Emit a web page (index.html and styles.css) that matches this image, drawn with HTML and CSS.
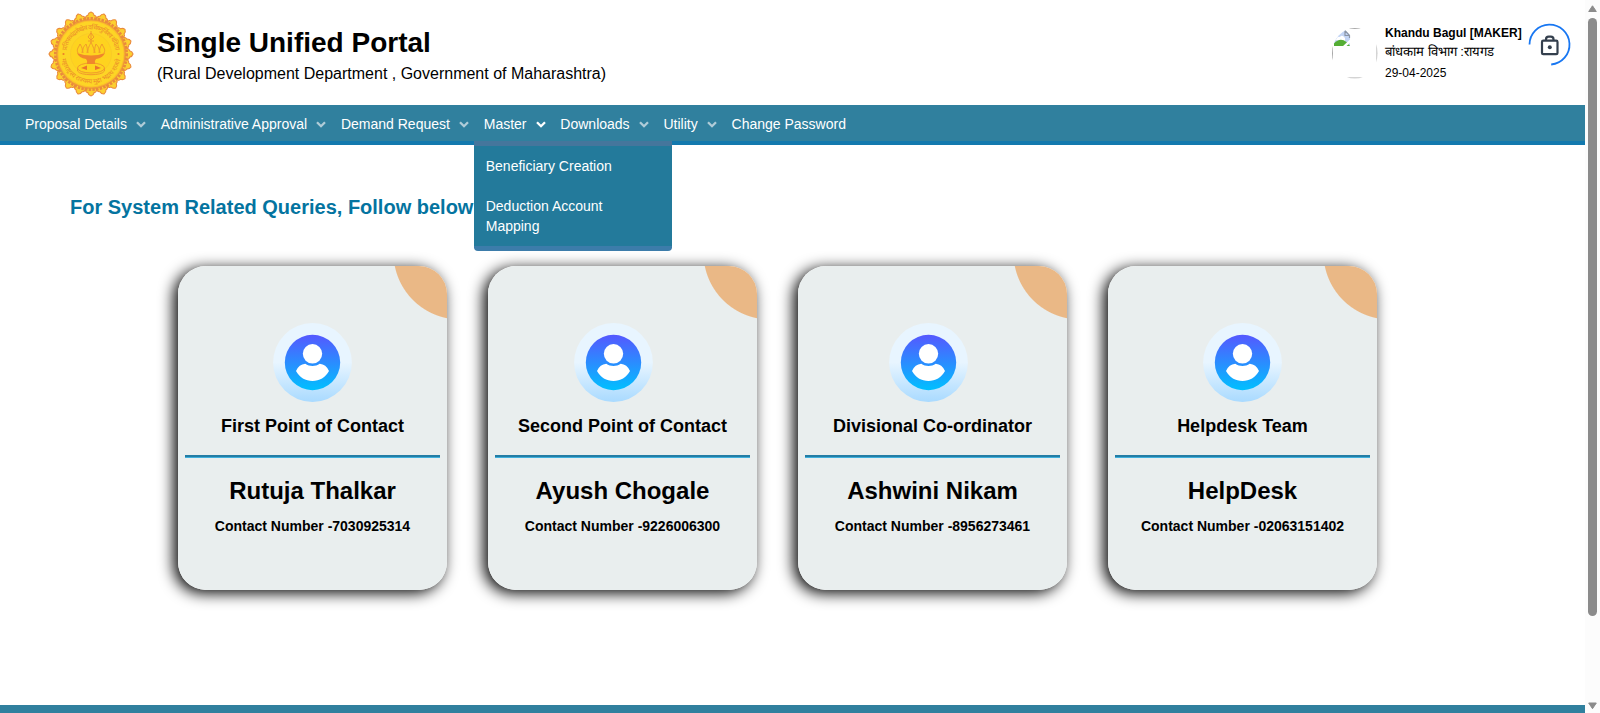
FILE: index.html
```html
<!DOCTYPE html>
<html lang="en">
<head>
<meta charset="utf-8">
<title>Single Unified Portal</title>
<link rel="stylesheet" href="styles.css">
</head>
<body>
<svg class="defs" width="0" height="0" aria-hidden="true">
  <defs>
    <linearGradient id="halo" x1="0" y1="0" x2="0" y2="1"><stop offset=".5" stop-color="#e8f5ff"/><stop offset="1" stop-color="#a9daff"/></linearGradient>
    <linearGradient id="disc" x1="0" y1="0" x2="0" y2="1"><stop offset="0" stop-color="#5558ff"/><stop offset="1" stop-color="#00c0ff"/></linearGradient>
    <symbol id="person" viewBox="0 0 79 79">
      <circle cx="39.5" cy="39.5" r="39.4" fill="url(#halo)"/>
      <circle cx="39.5" cy="39.5" r="27.7" fill="url(#disc)"/>
      <circle cx="39.5" cy="30.8" r="9.7" fill="#fff"/>
      <path d="M32.3 40.8C36.5 43.7 42.500 43.700 46.700 40.800C51 41.200 54 43.500 56 48C52.500 54.500 46.500 58 39.500 58S26.500 54.500 23 48C25 43.500 28 41.200 32.300 40.800Z" fill="#fff"/>
    </symbol>
    <symbol id="chevron" viewBox="0 0 10 7"><path d="M1 1.200L5 5.200L9 1.200" fill="none" stroke="currentColor" stroke-width="2.300"/></symbol>
    <path id="petal" d="M-5-34Q-6.500-38-3.200-38.600Q-2.500-41.300 0-42Q2.500-41.300 3.200-38.600Q6.500-38 5-34Z"/>
  </defs>
</svg>
<div class="page">
  <header class="header">
    <svg class="emblem" width="86" height="86" viewBox="-43 -43 86 86">
      <g fill="#fcd030" stroke="#ea8a3c" stroke-width="1.100">
        <use href="#petal"/><use href="#petal" transform="rotate(18)"/><use href="#petal" transform="rotate(36)"/><use href="#petal" transform="rotate(54)"/>
        <use href="#petal" transform="rotate(72)"/><use href="#petal" transform="rotate(90)"/><use href="#petal" transform="rotate(108)"/><use href="#petal" transform="rotate(126)"/>
        <use href="#petal" transform="rotate(144)"/><use href="#petal" transform="rotate(162)"/><use href="#petal" transform="rotate(180)"/><use href="#petal" transform="rotate(198)"/>
        <use href="#petal" transform="rotate(216)"/><use href="#petal" transform="rotate(234)"/><use href="#petal" transform="rotate(252)"/><use href="#petal" transform="rotate(270)"/>
        <use href="#petal" transform="rotate(288)"/><use href="#petal" transform="rotate(306)"/><use href="#petal" transform="rotate(324)"/><use href="#petal" transform="rotate(342)"/>
      </g>
      <circle r="35.500" fill="none" stroke="#ea8a3c" stroke-width="3" stroke-dasharray="2.500 1.200"/>
      <circle r="34" fill="#fbc02a" stroke="#ef9a35" stroke-width="1"/>
      <circle r="32.500" fill="#fdd525"/>
      <circle r="20.500" fill="#fed31f" stroke="#f9c928" stroke-width=".8"/>
      <path id="arcTop" d="M-24.500 -3A24.700 24.700 0 0 1 24.500 -3" fill="none"/>
      <path id="arcBottom" d="M-29.500 5A30 30 0 0 0 29.500 5" fill="none"/>
      <g class="motto">
        <text><textPath href="#arcTop" textLength="70">प्रतिपच्चंद्रलेखेव वर्धिष्णुर्विश्व वंदिता</textPath></text>
        <text><textPath href="#arcBottom" textLength="82">महाराष्ट्रस्य राज्यस्य मुद्रा भद्राय राजते</textPath></text>
      </g>
      <circle cx="-27.500" cy="0" r="1.100" fill="#ec7f2b"/><circle cx="27.500" cy="0" r="1.100" fill="#ec7f2b"/>
      <g fill="none" stroke="#f09a2c" stroke-width="1">
        <path d="M0-23V-12M-3-17L0-21L3-17L0-14ZM-3-13H3M-13-1C-15-5-12-7-11-10C-9-7-8-4-9-1M-8-1C-9-5-7-8-5-10C-4-7-3-4-4-1M-3-1C-4-5-1-9 0-12C1-9 4-5 3-1M4-1C3-4 4-7 5-10C7-8 9-5 8-1M9-1C8-4 9-7 11-10C12-7 15-5 13-1"/>
        <ellipse cx="0" cy="14" rx="13.500" ry="5"/><path d="M-13.500 14V17C-11 22 11 22 13.500 17V14"/>
      </g>
      <path d="M-14-1Q0 4 14-1Q12 4 5 5Q3 7 4 10H-4Q-3 7-5 5Q-12 4-14-1Z" fill="#f0862c"/>
      <path d="M-10 14L-4 11.500V16ZM10 14L4 11.500V16Z" fill="#ea742b"/>
    </svg>
    <div class="brand">
      <h1 class="brand-title">Single Unified Portal</h1>
      <p class="brand-sub">(Rural Development Department , Government of Maharashtra)</p>
    </div>
    <div class="account">
      <svg class="avatar" width="46" height="51" viewBox="0 0 46 51">
        <clipPath id="oval"><ellipse cx="22.800" cy="25.300" rx="22.800" ry="25.300"/></clipPath>
        <g clip-path="url(#oval)">
          <rect x=".5" y=".5" width="44.500" height="49.500" fill="none" stroke="#a9a9a9"/>
          <path d="M2 2H13L18 7V18H2Z" fill="#c3d5f5"/>
          <path d="M4 12Q5 8 8 9Q10 6 13 10V13Z" fill="#fff"/>
          <path d="M2 18V15.500Q8 9 14.500 14L18 18Z" fill="#55ae35"/>
          <path d="M13 2.500V7.500H18M3 2.500H13L17.500 7.500V10" fill="none" stroke="#8b95a5" stroke-width="1.200"/>
          <path d="M18 11.500L10.500 18.500H14L18 15Z" fill="#fff"/>
        </g>
      </svg>
      <div class="account-text">
        <strong>Khandu Bagul [MAKER]</strong>
        <span class="dept">बांधकाम विभाग :रायगड</span>
        <span>29-04-2025</span>
      </div>
      <svg class="lock" width="43" height="43" viewBox="0 0 43 43" fill="none">
        <path d="M1.500 21.500A20 20 0 1 1 23.200 41.500" stroke="#1877f2" stroke-width="1.800"/>
        <g stroke="#343f4d" stroke-width="2.200"><rect x="14" y="17.700" width="15.500" height="13.500" rx="1.300"/><path d="M18 17.500V16.300Q18 13.700 20.600 13.700H22.900Q25.500 13.700 25.500 16.300V17.500"/></g>
        <circle cx="21.800" cy="24.300" r="2" fill="#343f4d"/>
      </svg>
    </div>
  </header>

  <nav class="nav">
    <a class="nav-item">Proposal Details<svg class="chev"><use href="#chevron"/></svg></a>
    <a class="nav-item">Administrative Approval<svg class="chev"><use href="#chevron"/></svg></a>
    <a class="nav-item">Demand Request<svg class="chev"><use href="#chevron"/></svg></a>
    <div class="nav-item nav-open">Master<svg class="chev"><use href="#chevron"/></svg>
      <div class="menu"><a>Beneficiary Creation</a><a>Deduction Account Mapping</a></div>
    </div>
    <a class="nav-item">Downloads<svg class="chev"><use href="#chevron"/></svg></a>
    <a class="nav-item">Utility<svg class="chev"><use href="#chevron"/></svg></a>
    <a class="nav-item">Change Password</a>
  </nav>

  <main class="main">
    <h2 class="heading">For System Related Queries, Follow below</h2>
    <div class="cards">
      <article class="card">
        <svg class="person"><use href="#person"/></svg>
        <h3 class="role">First Point of Contact</h3><div class="rule"></div>
        <p class="name">Rutuja Thalkar</p><p class="phone">Contact Number -7030925314</p>
      </article>
      <article class="card">
        <svg class="person person-second"><use href="#person"/></svg>
        <h3 class="role">Second Point of Contact</h3><div class="rule"></div>
        <p class="name">Ayush Chogale</p><p class="phone">Contact Number -9226006300</p>
      </article>
      <article class="card">
        <svg class="person person-third"><use href="#person"/></svg>
        <h3 class="role">Divisional Co-ordinator</h3><div class="rule"></div>
        <p class="name">Ashwini Nikam</p><p class="phone">Contact Number -8956273461</p>
      </article>
      <article class="card">
        <svg class="person"><use href="#person"/></svg>
        <h3 class="role">Helpdesk Team</h3><div class="rule"></div>
        <p class="name">HelpDesk</p><p class="phone">Contact Number -02063151402</p>
      </article>
    </div>
  </main>
  <footer class="footer"></footer>
</div>
<div class="scrollbar">
  <svg width="9" height="8" viewBox="0 0 9 8"><path d="M4.500.8L8.300 6.500H.7Z" fill="#8b8b8b" stroke="#8b8b8b" stroke-linejoin="round"/></svg>
  <div class="thumb"></div>
  <svg class="down" width="9" height="8" viewBox="0 0 9 8"><path d="M4.500 6.700L8.300 1H.7Z" fill="#8b8b8b" stroke="#8b8b8b" stroke-linejoin="round"/></svg>
</div>
</body>
</html>
```

FILE: styles.css
```css
* { box-sizing: border-box; }
body {
  margin: 0;
  height: 713px;
  display: flex;
  overflow: hidden;
  background: #fff;
  color: #000;
  font-family: "Liberation Sans", Arial, sans-serif;
}
h1, h2, h3, p { margin: 0; }
.defs { position: absolute; }
.page { width: 1585px; display: flex; flex-direction: column; }

.header { height: 105px; display: flex; padding-left: 47.500px; }
.emblem { margin-top: 10.500px; }
.brand { margin-left: 23.500px; padding-top: 27px; }
.brand-title { font-size: 28px; line-height: 32px; }
.brand-sub { margin-top: 5px; font-size: 16px; line-height: 20px; }
.motto { font: 6.500px "Noto Sans", sans-serif; fill: #ec8a2c; }
.account { margin-left: auto; display: flex; padding-right: 14.500px; }
.avatar { margin-top: 28px; }
.account-text { width: 142.500px; margin-left: 7px; padding-top: 23px; display: flex; flex-direction: column; font-size: 12px; line-height: 20px; white-space: nowrap; }
.dept { font-size: 13.100px; height: 20px; line-height: 18px; }
.lock { margin-top: 23px; }

.nav { height: 40px; padding-left: 15px; display: flex; background: #30809e; border-bottom: 4px solid #1379ae; color: #fff; font-size: 14px; line-height: 38px; }
.nav-item { display: flex; padding: 0 4.850px 0 10px; position: relative; white-space: nowrap; }
.chev { width: 10px; height: 7px; margin: 16px 0 0 9px; color: #b0ccd8; }
.nav-open .chev { color: #fff; }
.menu { position: absolute; left: 0; top: 36px; z-index: 2; width: 198px; background: #237a9b; border-top: 5px solid #45769c; border-bottom: 5px solid #3c7caa; border-radius: 0 0 4px 4px; line-height: 20px; white-space: normal; }
.menu a { display: block; padding: 10px 30px 10px 12px; }

.main { flex: 1; padding-top: 49px; }
.heading { padding-left: 70px; font-size: 20px; line-height: 26px; color: #0474a0; }
.cards { display: flex; gap: 41px; margin: 46px 0 0 178px; }
.card {
  width: 269px;
  height: 324px;
  padding: 57px 7px 0;
  border-radius: 28px;
  display: flex;
  flex-direction: column;
  align-items: center;
  background: radial-gradient(circle at 282px -13px, #eab886 66px, #e9eeee 67px);
  box-shadow: -4px 3px 15px #000;
}
.person { width: 79px; height: 79px; }
.person-second { margin-right: 18px; }
.person-third { margin-right: 9px; }
.role { margin-top: 14px; font-size: 18px; line-height: 20px; }
.rule { width: 255px; height: 3px; margin-top: 19px; background: #237da5; border-bottom: 1px solid #3fb0dd; }
.name { margin-top: 19px; font-size: 24px; font-weight: bold; line-height: 28px; }
.phone { margin-top: 13px; font-size: 14px; font-weight: bold; line-height: 16px; }
.footer { height: 8px; background: #30809e; }

.scrollbar { width: 15px; padding: 5px 3px 3px; display: flex; flex-direction: column; background: #fcfcfc; }
.thumb { height: 598px; margin-top: 5px; border-radius: 5px; background: #8b8b8b; }
.down { margin-top: auto; }
```
